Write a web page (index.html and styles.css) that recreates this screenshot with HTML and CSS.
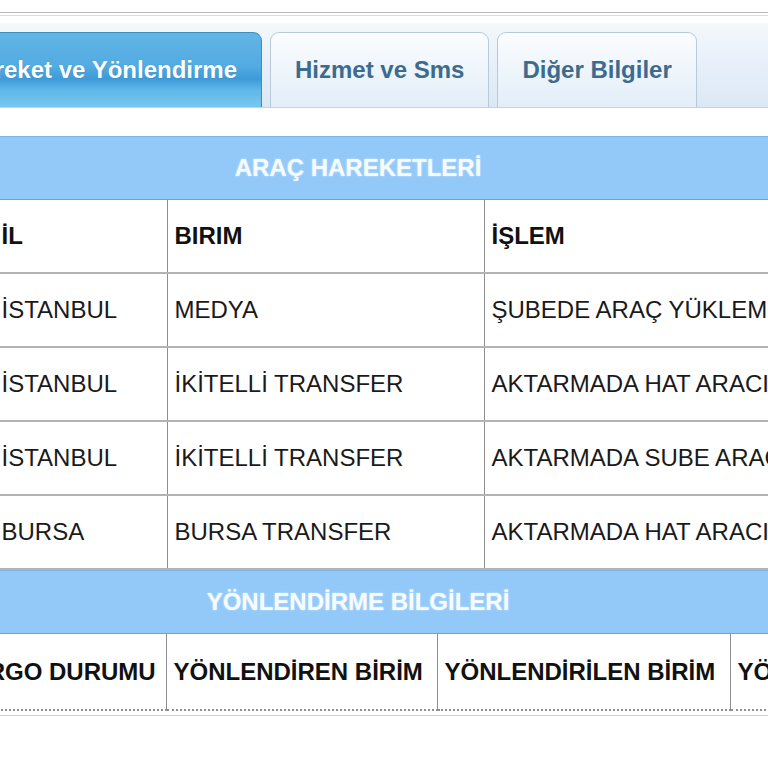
FILE: index.html
```html
<!DOCTYPE html>
<html lang="tr">
<head>
    <meta charset="UTF-8">
    <meta name="viewport" content="width=device-width, initial-scale=1.0">
    <title>Araç Hareketleri</title>
    <link rel="stylesheet" href="styles.css">
</head>
<body>
    <div class="top-rule"></div>
    <div class="page">
        <div class="tab-bar">
            <div class="tab active">Hareket ve Yönlendirme</div>
            <div class="tab">Hizmet ve Sms</div>
            <div class="tab">Diğer Bilgiler</div>
        </div>

        <div class="section">
            <div class="band">ARAÇ HAREKETLERİ</div>
            <table class="grid moves">
                <colgroup>
                    <col style="width: 56px">
                    <col style="width: 173px">
                    <col style="width: 317px">
                    <col>
                </colgroup>
                <tr class="head">
                    <td></td>
                    <td>İL</td>
                    <td>BIRIM</td>
                    <td>İŞLEM</td>
                </tr>
                <tr>
                    <td></td>
                    <td>İSTANBUL</td>
                    <td>MEDYA</td>
                    <td>ŞUBEDE ARAÇ YÜKLEME</td>
                </tr>
                <tr>
                    <td></td>
                    <td>İSTANBUL</td>
                    <td>İKİTELLİ TRANSFER</td>
                    <td>AKTARMADA HAT ARACINA YÜKLEME</td>
                </tr>
                <tr>
                    <td></td>
                    <td>İSTANBUL</td>
                    <td>İKİTELLİ TRANSFER</td>
                    <td>AKTARMADA SUBE ARACINA YÜKLEME</td>
                </tr>
                <tr>
                    <td></td>
                    <td>BURSA</td>
                    <td>BURSA TRANSFER</td>
                    <td>AKTARMADA HAT ARACINA YÜKLEME</td>
                </tr>
            </table>

            <div class="band">YÖNLENDİRME BİLGİLERİ</div>
            <div class="grid-end">
                <table class="grid routes">
                    <colgroup>
                        <col style="width: 228px">
                        <col style="width: 271px">
                        <col style="width: 293px">
                        <col>
                    </colgroup>
                    <tr class="head">
                        <td>KARGO DURUMU</td>
                        <td>YÖNLENDİREN BİRİM</td>
                        <td>YÖNLENDİRİLEN BİRİM</td>
                        <td>YÖNLENDİRME TARİHİ</td>
                    </tr>
                </table>
            </div>
        </div>
    </div>
</body>
</html>
```

FILE: styles.css
```css
body {
    font-family: "Liberation Sans", Arial, sans-serif;
    background-color: #ffffff;
    color: #1a1a1a;
    margin: 0;
    padding-top: 12px;
    overflow: hidden;
}
.top-rule {
    height: 2px;
    border-top: 1px solid #bdbdbd;
    border-bottom: 1px solid #dcdcdc;
    margin-bottom: 7px;
}
.page {
    width: 840px;
    margin-left: -62px;
}

/* tabs */
.tab-bar {
    display: flex;
    align-items: flex-end;
    gap: 8px;
    height: 84px;
    padding-left: 1px;
    background: linear-gradient(#f4f8fc, #e4eef8 60%, #dbe8f4);
    border-bottom: 1px solid #c6d3de;
}
.tab {
    height: 74px;
    line-height: 74px;
    padding: 0 24px;
    font-size: 24px;
    font-weight: bold;
    color: #3d6b8f;
    background: linear-gradient(#fbfdff, #eef5fb 50%, #e3eef8);
    border: 1px solid #b8cad9;
    border-bottom: none;
    border-radius: 9px 9px 0 0;
}
.tab.active {
    color: #ffffff;
    background: linear-gradient(#62b5e6, #52abe2 45%, #3e9bd8 62%, #62b8ea 78%, #78c6f0);
    border-color: #3f8cc4;
    text-shadow: 0 0 1px rgba(20, 80, 130, 0.4);
}

/* sections */
.section {
    margin-top: 28px;
}
.band {
    height: 62px;
    line-height: 62px;
    text-align: center;
    font-size: 24px;
    font-weight: bold;
    color: #f6fbff;
    background-color: #93c9f9;
    border-top: 1px solid #7cb6e8;
    border-bottom: 1px solid #8e9ba6;
    text-shadow: 0 0 2px rgba(255, 255, 255, 0.6);
}
.grid {
    width: 100%;
    table-layout: fixed;
    border-collapse: collapse;
    font-size: 24px;
}
.grid td {
    height: 28px;
    line-height: 28px;
    padding: 22px 12px 22px 7px;
    white-space: nowrap;
    overflow: hidden;
    border-bottom: 2px solid #b3b3b3;
    border-left: 1px solid #8f8f8f;
}
.grid td:first-child {
    border-left: none;
}
.grid .head td {
    font-weight: bold;
    color: #111111;
}
.routes td:first-child {
    padding-left: 15px;
}
.routes td {
    padding-top: 24px;
    padding-bottom: 23px;
    border-bottom: 2px dotted #8f8f8f;
}
.grid-end {
    padding-bottom: 4px;
    border-bottom: 1px solid #cfcfcf;
}
```
